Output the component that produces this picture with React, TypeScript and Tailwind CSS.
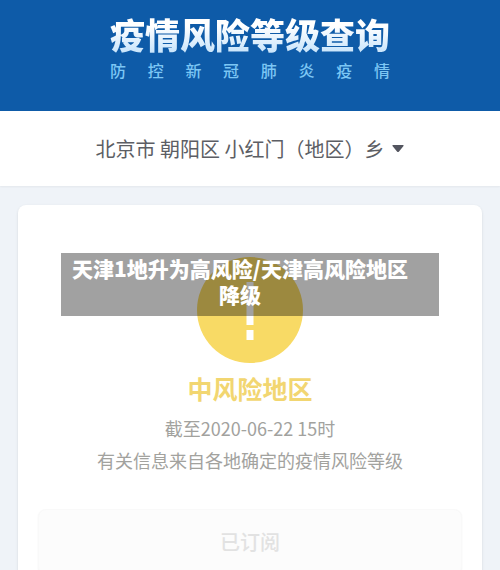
import { useState } from "react";

const subtitulo = ["防", "控", "新", "冠", "肺", "炎", "疫", "情"];

function Cabecera() {
  return (
    <header className="bg-[#0e5ba8] pt-[14px] pb-7">
      <div className="mx-auto w-fit">
        <h1 className="bg-linear-to-b from-white from-30% to-[#c5e3fb] bg-clip-text text-[35px] leading-10 font-black text-transparent">
          疫情风险等级查询
        </h1>

        <p className="mt-1 flex justify-between text-base leading-[25px] font-medium text-[#7cc6f4]">
          {subtitulo.map((letra) => (
            <span key={letra}>{letra}</span>
          ))}
        </p>
      </div>
    </header>
  );
}

function IconoAviso() {
  return (
    <svg viewBox="0 0 106 106" className="size-[106px]" aria-hidden="true">
      <circle cx="53" cy="53" r="53" fill="#f8da65" />
      <rect x="49.500" y="25" width="7" height="43" fill="#fff" />
      <rect x="49.500" y="73" width="7" height="10" fill="#fff" />
    </svg>
  );
}

export default function App() {
  const [abierto, setAbierto] = useState(false);

  return (
    <main className="flex h-screen flex-col overflow-hidden bg-[#eff3f8] font-['Noto_Sans_CJK_SC',sans-serif]">
      <Cabecera />

      <div className="flex justify-center bg-white py-6 shadow-xs">
        <button
          type="button"
          aria-expanded={abierto}
          onClick={() => setAbierto(!abierto)}
          className="flex items-center gap-2 text-xl leading-[27px] text-[#5c5e64]"
        >
          北京市 朝阳区 小红门（地区）乡
          <svg viewBox="0 0 12 7" className="h-[7px] w-3" aria-hidden="true">
            <path d="M1 0h10q1 0 .5 1L7 6.400q-1 1-2 0L.5 1Q0 0 1 0z" fill="#53555f" />
          </svg>
        </button>
      </div>

      <section className="relative mx-[18px] mt-[19px] flex flex-1 flex-col items-center rounded-t-lg bg-white px-5 pt-[52px] shadow-sm">
        <IconoAviso />

        <h2 className="mt-[7px] text-[25px] leading-9 font-bold text-[#f2d671]">
          中风险地区
        </h2>
        <p className="mt-[6px] text-lg leading-8 text-[#a2a29e]">
          截至2020-06-22 15时
        </p>
        <p className="text-lg leading-8 text-[#a2a29e]">
          有关信息来自各地确定的疫情风险等级
        </p>

        <button
          type="button"
          disabled
          className="mt-[33px] w-full shrink-0 rounded-lg border border-[#f9f9f9] bg-[#fcfcfc] py-4 text-xl leading-8 font-medium text-[#e2e2e2] shadow-xs"
        >
          已订阅
        </button>

        {/* rótulo sobre el icono */}
        <div className="absolute inset-x-[43px] top-12 bg-black/37 pt-[2px] pr-7 pb-[9px] pl-2 text-center text-[21px] leading-[26px] font-black text-white">
          天津1地升为高风险/天津高风险地区降级
        </div>
      </section>
    </main>
  );
}
